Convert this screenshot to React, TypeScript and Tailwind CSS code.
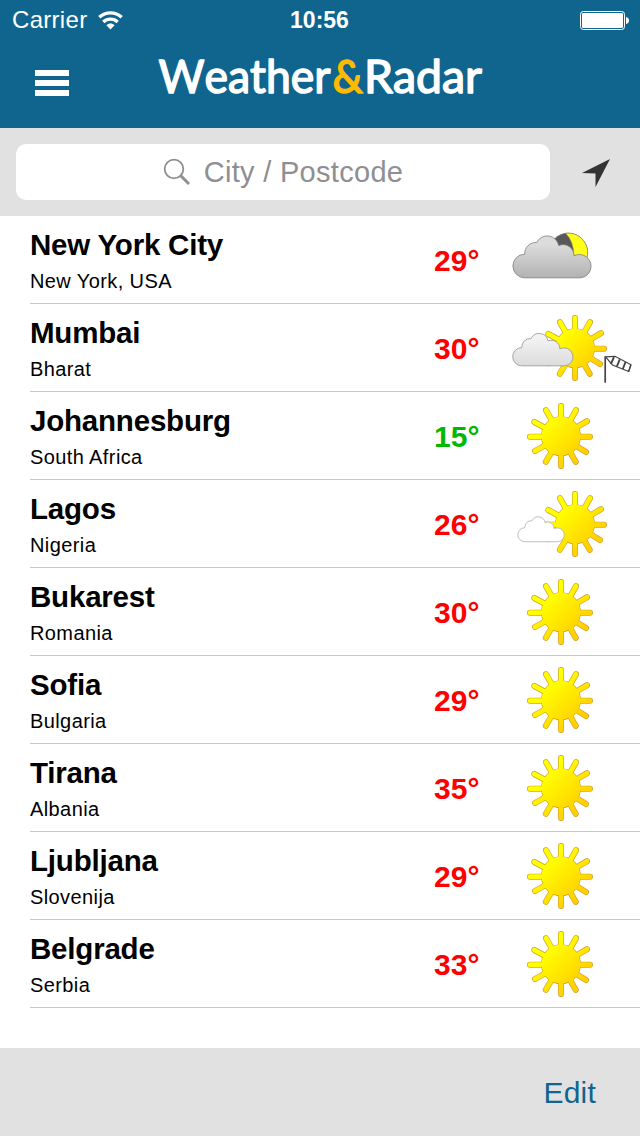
type Weather = 'moon-cloud' | 'sun-cloud-wind' | 'sun' | 'sun-light-cloud';

interface City {
  readonly name: string;
  readonly region: string;
  readonly temp: number;
  readonly weather: Weather;
}

const cities: City[] = [
  { name: 'New York City', region: 'New York, USA', temp: 29, weather: 'moon-cloud' },
  { name: 'Mumbai', region: 'Bharat', temp: 30, weather: 'sun-cloud-wind' },
  { name: 'Johannesburg', region: 'South Africa', temp: 15, weather: 'sun' },
  { name: 'Lagos', region: 'Nigeria', temp: 26, weather: 'sun-light-cloud' },
  { name: 'Bukarest', region: 'Romania', temp: 30, weather: 'sun' },
  { name: 'Sofia', region: 'Bulgaria', temp: 29, weather: 'sun' },
  { name: 'Tirana', region: 'Albania', temp: 35, weather: 'sun' },
  { name: 'Ljubljana', region: 'Slovenija', temp: 29, weather: 'sun' },
  { name: 'Belgrade', region: 'Serbia', temp: 33, weather: 'sun' },
];

const SUN_RAYS =
  'M61 44.5V14M61 44.5 76 18.2M61 44.5 87 29.2M61 44.7H90M61 44.5 86 60M61 44.5 75.7 69.8M61 44.5V74M61 44.5 45.8 69.8M61 44.5 35 59M61 44.7H30M61 44.5 34.3 30M61 44.5 46 18.2';

const CLOUD =
  'M37 134A35.5 35.5 0 0 1 37 63A33 33 0 0 1 73 28A35 35 0 0 1 139 37A33 33 0 0 1 185 68A35 35 0 1 1 203 134Z';

function Sun({ dx = 0 }: { readonly dx?: number }) {
  return (
    <g transform={`translate(${dx} 0)`} strokeLinecap="round">
      <path d={SUN_RAYS} stroke="#d3a02c" strokeWidth="6" />
      <circle cx="61" cy="44.2" r="20" fill="#d3a02c" />
      <path d={SUN_RAYS} stroke="url(#sun)" strokeWidth="4.7" />
      <circle cx="61" cy="44.2" r="19.4" fill="url(#sun)" />
    </g>
  );
}

function Cloud({ x, y, scale, fill, stroke }: { readonly x: number; readonly y: number; readonly scale: number; readonly fill: string; readonly stroke: string }) {
  return (
    <path
      d={CLOUD}
      transform={`translate(${x} ${y}) scale(${scale})`}
      fill={fill}
      stroke={stroke}
      strokeWidth={0.8 / scale}
    />
  );
}

function Windsock() {
  return (
    <g stroke="#444" fill="none">
      <path d="M105.2 52.5V78.7" strokeWidth="1.7" />
      <path d="M105.5 52.8 115 52.3 131 60.8 128.8 67.5 112.5 61Z" fill="#fff" strokeWidth="1.2" />
      <path d="M114 53.2 110.8 60M119.8 55.3 116.8 62.5M125.5 58.2 122.8 65" strokeWidth="1.9" />
      <path d="M130.8 61 128.6 67.3" strokeWidth="1.3" />
    </g>
  );
}

function WeatherIcon({ weather }: { readonly weather: Weather }) {
  return (
    <svg width="140" height="88" viewBox="0 0 140 88" fill="none" className="shrink-0">
      <defs>
        <linearGradient id="sun" gradientUnits="userSpaceOnUse" x1="42" y1="25" x2="81" y2="65">
          <stop offset="0.15" stopColor="#ffff00" />
          <stop offset="1" stopColor="#ffcc00" />
        </linearGradient>
        <linearGradient id="cloud-dark" x1="0" y1="0" x2="0" y2="1">
          <stop offset="0.2" stopColor="#dcdcdc" />
          <stop offset="1" stopColor="#b2b2b2" />
        </linearGradient>
        <linearGradient id="cloud-light" x1="0" y1="0" x2="0" y2="1">
          <stop offset="0.1" stopColor="#f4f4f4" />
          <stop offset="1" stopColor="#dcdcdc" />
        </linearGradient>
      </defs>
      {weather === 'moon-cloud' && (
        <>
          <circle cx="68.3" cy="36.5" r="19.4" fill="#595959" stroke="#777" strokeWidth="0.6" />
          <path d="M65.7 17.3A19.4 19.4 0 0 1 86.5 43L73.8 40Q74 26 65.7 17.3Z" fill="#ffff1a" stroke="#8f8f50" strokeWidth="0.6" />
          <Cloud x={12.4} y={17.2} scale={0.333} fill="url(#cloud-dark)" stroke="#7d7d7d" />
        </>
      )}
      {weather === 'sun' && <Sun />}
      {weather === 'sun-cloud-wind' && (
        <>
          <Sun dx={14} />
          <Cloud x={12.3} y={27.4} scale={0.257} fill="url(#cloud-light)" stroke="#929292" />
          <Windsock />
        </>
      )}
      {weather === 'sun-light-cloud' && (
        <>
          <Sun dx={14} />
          <Cloud x={17.5} y={35.2} scale={0.198} fill="#fff" stroke="#b0b0b0" />
        </>
      )}
    </svg>
  );
}

function StatusBar() {
  return (
    <div className="flex h-10 items-center justify-between pr-[11px] pl-3 text-white">
      <div className="flex w-[200px] items-center gap-[11px]">
        <span className="text-[24px] leading-[42px] tracking-[0.3px]">Carrier</span>
        <svg width="25" height="19" viewBox="0 0 25 19" fill="none" stroke="#fff" strokeWidth="3.4">
          <path d="M1.3 6.2C7.6.4 17.4.4 23.7 6.2" />
          <path d="M5.3 11C9.4 7.2 15.6 7.2 19.7 11" />
          <path d="M8.4 14.3C10.8 12 14.2 12 16.6 14.3L12.5 18.4Z" fill="#fff" stroke="none" />
        </svg>
      </div>
      <span className="relative right-px text-[23px] leading-[42px] font-bold">10:56</span>
      <div className="flex w-[200px] justify-end">
        <svg width="49" height="19" viewBox="0 0 49 19" fill="none">
          <rect x="0.5" y="0.5" width="44" height="18" rx="2.8" stroke="#fff" />
          <rect x="2" y="2" width="41" height="15" rx="1.3" fill="#fff" />
          <path d="M46 6C48.2 6.3 49 7.6 49 9.5S48.2 12.7 46 13Z" fill="#fff" />
        </svg>
      </div>
    </div>
  );
}

function Header() {
  return (
    <header className="h-32 bg-[#10658f]">
      <StatusBar />
      <div className="flex items-start pl-[35px]">
        <button type="button" aria-label="Menu" className="mt-[30px] flex w-[34px] flex-col gap-1">
          <span className="h-1.5 bg-white" />
          <span className="h-1.5 bg-white" />
          <span className="h-1.5 bg-white" />
        </button>
        <svg
          width="340"
          height="64"
          viewBox="0 0 340 64"
          className="ml-[81px] font-[Lato,sans-serif] text-[47px] [font-kerning:none]"
          strokeWidth="1.5"
          strokeLinejoin="round"
        >
          <text x="8.5" y="52.5" textLength="172" lengthAdjust="spacingAndGlyphs" fill="#fff" stroke="#fff">Weather</text>
          <text x="182.5" y="52.5" textLength="30.5" lengthAdjust="spacingAndGlyphs" fill="#ffba00" stroke="#ffba00">&amp;</text>
          <text x="214" y="52.5" textLength="118" lengthAdjust="spacingAndGlyphs" fill="#fff" stroke="#fff">Radar</text>
        </svg>
      </div>
    </header>
  );
}

function SearchBar() {
  return (
    <div className="flex h-22 items-center bg-[#e1e1e1] pl-4">
      <div className="flex h-14 w-[534px] items-center justify-center gap-[13px] rounded-[10px] bg-white text-[#8e8e93]">
        <svg width="28" height="28" viewBox="0 0 28 28" fill="none" stroke="currentColor">
          <circle cx="11" cy="11" r="9.3" strokeWidth="1.8" />
          <path d="M17.5 17.5 26 26" strokeWidth="3" />
        </svg>
        <span className="text-[29px] leading-none tracking-[0.3px]">City / Postcode</span>
      </div>
      <svg width="30" height="30" viewBox="0 0 30 30" className="ml-[31px]">
        <path d="M29 2 14.5 30V16.5L1 16Z" fill="#333" />
      </svg>
    </div>
  );
}

function CityRow({ city }: { readonly city: City }) {
  return (
    <li className="ml-[30px] flex h-22 border-b border-[#c8c7cc]">
      <div className="flex-1 pt-3">
        <h2 className="text-[29.5px] leading-[34px] font-bold tracking-[-0.2px]">{city.name}</h2>
        <p className="mt-[7px] text-[20px] leading-6 tracking-[0.4px]">{city.region}</p>
      </div>
      <span className={`w-[66px] text-[30px] leading-[90px] font-bold ${city.temp < 20 ? 'text-[#00b800]' : 'text-[#ff0000]'}`}>
        {city.temp}°
      </span>
      <WeatherIcon weather={city.weather} />
    </li>
  );
}

export default function App() {
  return (
    <main className="flex h-[1136px] w-[640px] flex-col overflow-hidden bg-white font-['Liberation_Sans',Arial,sans-serif] text-black">
      <Header />
      <SearchBar />
      <ul className="flex-1">
        {cities.map((city) => (
          <CityRow key={city.name} city={city} />
        ))}
      </ul>
      <footer className="flex h-22 items-center justify-end bg-[#e1e1e1] pr-11">
        <button type="button" className="text-[30px] tracking-[0.2px] text-[#10658f]">Edit</button>
      </footer>
    </main>
  );
}
